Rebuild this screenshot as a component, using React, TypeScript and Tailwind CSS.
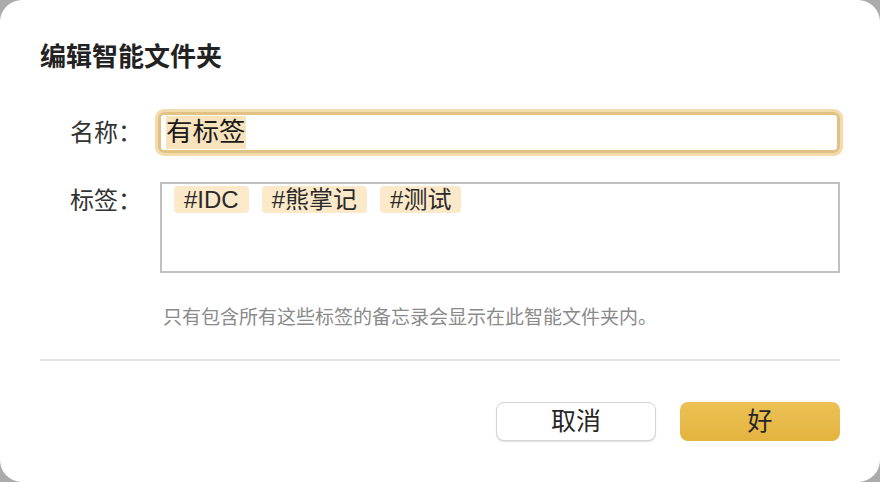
import React from 'react';

const tags = ['#IDC', '#熊掌记', '#测试'];

export default function App() {
  return (
    <div className="w-[880px] h-[482px] bg-[#ababab] font-['Liberation_Sans','Noto_Sans_CJK_SC',sans-serif]">
      <div className="w-full h-full bg-white rounded-[22px] px-[40px] flex flex-col">
        <h1 className="mt-[44px] h-[26px] leading-[26px] text-[26px] font-bold text-[#222]">
          编辑智能文件夹
        </h1>

        <div className="mt-[42px] flex items-center h-[41px]">
          <label className="w-[118px] pl-[30px] text-[24px] text-[#333]">名称：</label>
          <div className="w-[682px] h-[41px] border-[3px] border-[#e2c184] shadow-[0_0_0_3px_#f3dcab] rounded-[6px] flex items-center pl-[5px]">
            <span className="bg-[#f8e3bc] text-[26.5px] leading-[33px] text-[#1a1a1a]">有标签</span>
          </div>
        </div>

        <div className="mt-[29px] flex items-start">
          <label className="w-[120px] h-[38px] flex items-center pl-[30px] text-[24px] text-[#333]">标签：</label>
          <div className="w-[680px] h-[91px] border-2 border-[#c0c0c0] px-[12px] pt-[2px] flex items-start gap-[13px]">
            {tags.map((t) => (
              <span
                key={t}
                className="h-[27px] px-[10px] bg-[#fbe9c9] rounded-[4px] text-[24px] leading-[27px] text-[#2a2a2a]"
              >
                {t}
              </span>
            ))}
          </div>
        </div>

        <p className="mt-[33px] pl-[123px] text-[19px] leading-[24px] text-[#8a8a8a]">
          只有包含所有这些标签的备忘录会显示在此智能文件夹内。
        </p>

        <div className="mt-[29px] h-[2px] bg-[#e4e4e4]" />

        <div className="mt-[41px] flex justify-end gap-[24px]">
          <button className="w-[160px] h-[39px] rounded-[8px] bg-white border border-[#d4d4d4] shadow-[0_1px_1px_rgba(0,0,0,0.12)] text-[25px] leading-[37px] text-[#262626]">
            取消
          </button>
          <button className="w-[160px] h-[39px] rounded-[8px] bg-gradient-to-b from-[#ebc254] to-[#e4b33f] text-[25px] leading-[39px] text-[#262626]">
            好
          </button>
        </div>
      </div>
    </div>
  );
}
